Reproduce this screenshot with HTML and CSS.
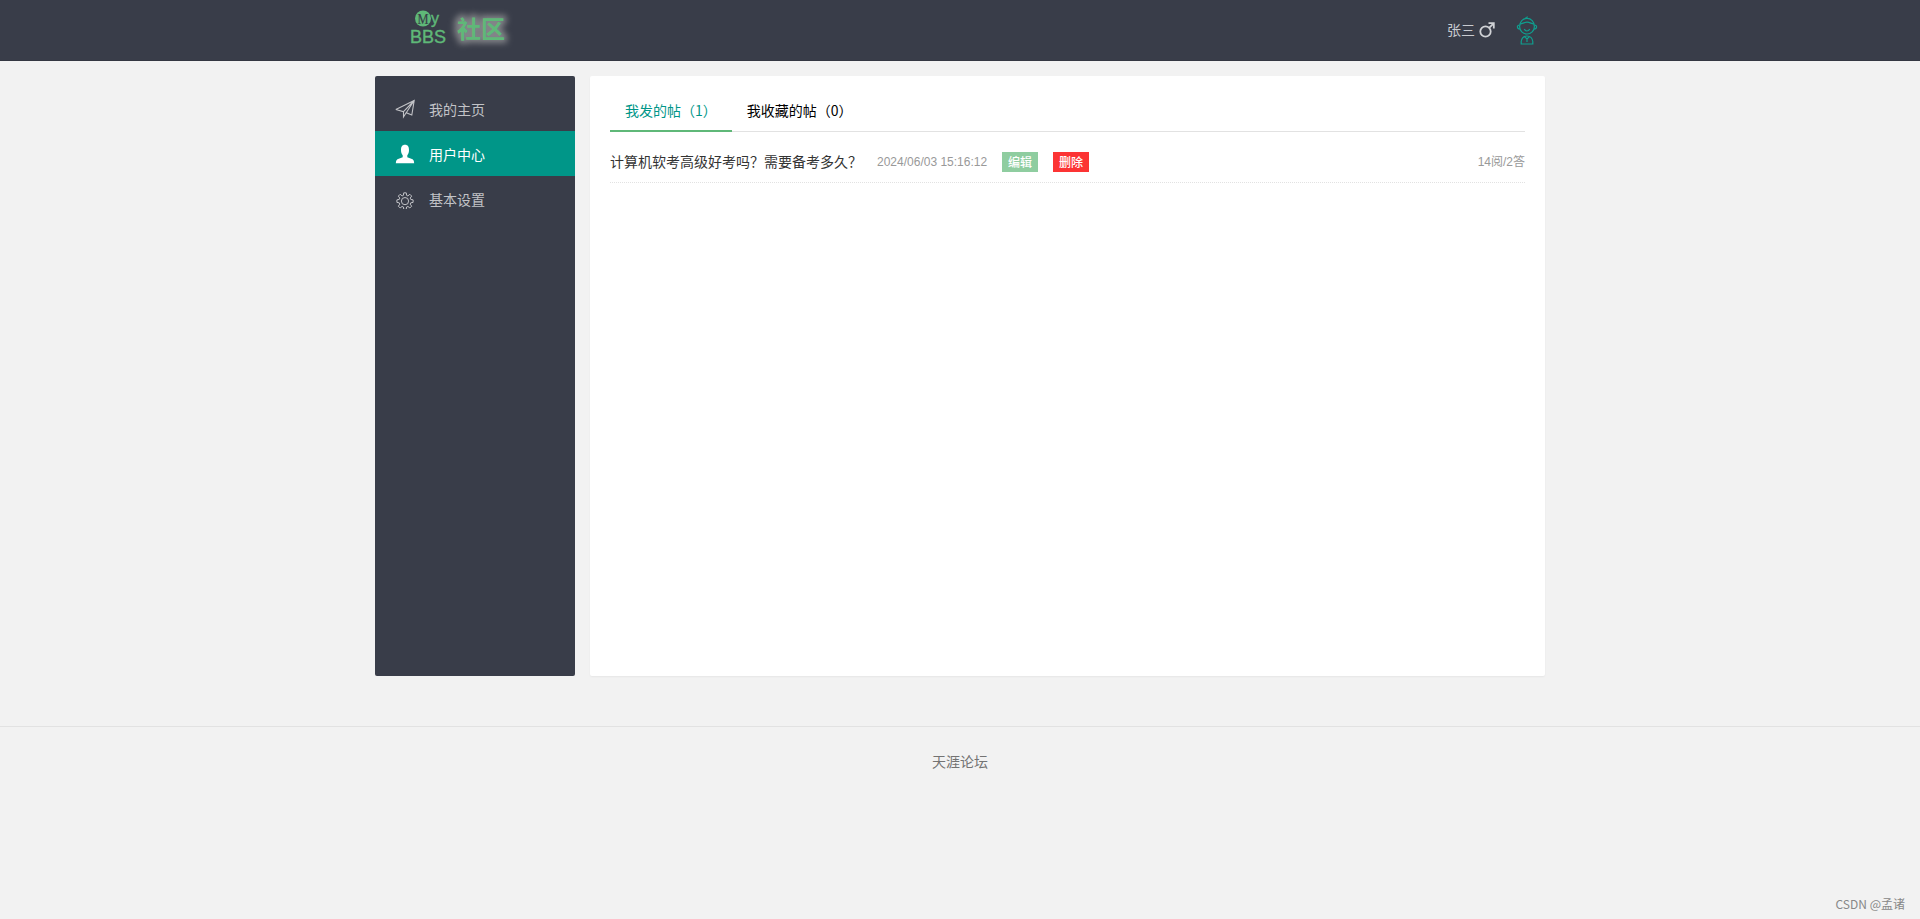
FILE: index.html
```html
<!DOCTYPE html>
<html lang="zh-CN">
<head>
    <meta charset="UTF-8">
    <meta name="viewport" content="width=device-width, initial-scale=1.0">
    <title>用户中心</title>
    <link rel="stylesheet" href="styles.css">
</head>
<body>
    <header class="header">
        <div class="header-inner">
            <a class="logo">
                <svg width="112" height="44" viewBox="0 0 112 44">
                    <defs>
                        <filter id="glow" x="-30%" y="-40%" width="160%" height="180%">
                            <feGaussianBlur stdDeviation="3"/>
                        </filter>
                    </defs>
                    <circle cx="18" cy="13.5" r="8" fill="#5fb878"/>
                    <text class="logo-m" x="12.5" y="18.5" textLength="11" lengthAdjust="spacingAndGlyphs">M</text>
                    <text class="logo-text" x="26" y="19" font-size="16">y</text>
                    <text class="logo-text" x="5" y="38" font-size="17.5" textLength="36" lengthAdjust="spacingAndGlyphs">BBS</text>
                    <text class="logo-name glow" x="52" y="33" filter="url(#glow)">社区</text>
                    <text class="logo-name" x="52" y="33">社区</text>
                </svg>
            </a>
            <div class="user">
                <span class="user-name">张三</span>
                <svg class="male" width="16" height="16" viewBox="0 0 16 16">
                    <circle cx="6.5" cy="9.5" r="5.2"/>
                    <path d="M10.2 5.8L14.6 1.4M9.5 1.2H14.8V6.5"/>
                </svg>
                <svg class="avatar" width="22" height="30" viewBox="0 0 22 30">
                    <path d="M3.6 10.5C3.6 5.5 7 2.4 11 2.4S18.4 5.5 18.4 10.5C18.4 15 15 18 11 18S3.6 15 3.6 10.5Z"/>
                    <path d="M4.2 8C7 7.6 8 6.2 11 6.2S15 7.6 17.8 8M3.6 9C.6 9 .6 13 4 13M18.4 9C21.4 9 21.4 13 18 13"/>
                    <path d="M8.2 13.2Q11 16.8 13.8 13.2M9.5 2.4Q10 .8 12 1"/>
                    <path d="M5.2 28V25.5Q6 20 11 20T16.8 25.5V28ZM8.5 20.6L11 23L13.5 20.6M11 23V26"/>
                </svg>
            </div>
        </div>
    </header>

    <div class="container">
        <ul class="side-nav">
            <li>
                <svg width="20" height="20" viewBox="0 0 20 20">
                    <path d="M.8 10.5L19.2 1.5L16.8 16L11.2 13.8L8.5 18V12.7L.8 10.5M8.5 12.7L19.2 1.5L11.2 13.8"/>
                </svg>
                <span>我的主页</span>
            </li>
            <li class="active">
                <svg width="20" height="20" viewBox="0 0 20 20">
                    <path class="solid" d="M10 .7C13 .7 14 2.8 14 6C14 8.4 13.4 10 12.3 11.3V13.3L17.6 15.2Q19.2 16 19.2 19.2H.8Q.8 16 2.4 15.2L7.7 13.3V11.3C6.6 10 6 8.4 6 6C6 2.8 7 .7 10 .7Z"/>
                </svg>
                <span>用户中心</span>
            </li>
            <li>
                <svg width="20" height="20" viewBox="0 0 20 20">
                    <g transform="translate(1 2.4) scale(.9)">
                        <path d="M8.6 1.6H11.4L11.8 4.4L13.2 5L15.4 3.2L17.4 5.2L15.8 7.4L16.4 8.9L19 9.4V12.2L16.4 12.7L15.8 14.2L17.4 16.4L15.4 18.4L13.2 16.7L11.8 17.3L11.4 20H8.6L8.2 17.3L6.8 16.7L4.6 18.4L2.6 16.4L4.2 14.2L3.6 12.7L1 12.2V9.4L3.6 8.9L4.2 7.4L2.6 5.2L4.6 3.2L6.8 5L8.2 4.4Z"/>
                        <circle cx="10" cy="10.8" r="4"/>
                    </g>
                </svg>
                <span>基本设置</span>
            </li>
        </ul>

        <div class="panel">
            <ul class="tabs">
                <li class="active">我发的帖（1）</li>
                <li>我收藏的帖（0）</li>
            </ul>
            <ul class="post-list">
                <li>
                    <a class="title">计算机软考高级好考吗？需要备考多久？</a>
                    <i>2024/06/03 15:16:12</i>
                    <a class="btn btn-edit">编辑</a>
                    <a class="btn btn-del">删除</a>
                    <em>14阅/2答</em>
                </li>
            </ul>
        </div>
    </div>

    <footer class="footer">天涯论坛</footer>
    <div class="watermark">CSDN @孟诸</div>
</body>
</html>
```

FILE: styles.css
```css
* {
    box-sizing: border-box;
    margin: 0;
    padding: 0;
}
body {
    background: #f2f2f2;
    font: 14px/24px "Noto Sans CJK SC", sans-serif;
    color: #333;
}
ul { list-style: none; }
i, em { font-style: normal; }
svg { display: block; flex: none; }

.header {
    height: 61px;
    background: #393d49;
    border-bottom: 1px solid #343742;
}
.header-inner {
    width: 1170px;
    height: 60px;
    margin: 0 auto;
    padding: 0 7px 0 30px;
    display: flex;
    justify-content: space-between;
}
.logo { padding-top: 5px; }
.logo svg { overflow: visible; }
.logo-text {
    font-family: "Liberation Sans", Arial, sans-serif;
    fill: #5fb878;
    stroke: #5fb878;
    stroke-width: .4;
}
.logo-m {
    font: 15px "Liberation Serif", serif;
    fill: #393d49;
    stroke: #393d49;
    stroke-width: .2;
}
.logo-name {
    font-size: 24px;
    font-weight: bold;
    fill: #5fb878;
}
.glow {
    fill: #aaa;
    stroke: #aaa;
    stroke-width: 6;
    opacity: .65;
}
.user {
    display: flex;
    align-items: center;
    color: #c8cacf;
}
.user-name { margin-top: -2px; }
.male {
    margin: 0 21px 0 4px;
    fill: none;
    stroke: #d0d2d6;
    stroke-width: 1.8;
}
.avatar {
    margin-top: 2px;
    fill: none;
    stroke: #0f9f8f;
    stroke-width: 1.2;
}

.container {
    width: 1170px;
    margin: 15px auto 0;
    display: flex;
    gap: 15px;
}
.side-nav {
    width: 200px;
    height: 600px;
    padding: 10px 0;
    background: #393d49;
    border-radius: 2px;
}
.side-nav li {
    height: 45px;
    padding-left: 20px;
    display: flex;
    align-items: center;
    gap: 14px;
    color: #c2c3c7;
}
.side-nav svg {
    fill: none;
    stroke: currentColor;
    stroke-width: 1.1;
}
.side-nav .solid {
    fill: #fff;
    stroke: none;
}
.side-nav .active {
    background: #009688;
    color: #fff;
}

.panel {
    flex: 1;
    height: 600px;
    padding: 15px 20px;
    background: #fff;
    border-radius: 2px;
    box-shadow: 0 1px 2px rgba(0,0,0,.05);
}
.tabs {
    height: 41px;
    display: flex;
    border-bottom: 1px solid #e2e2e2;
}
.tabs li {
    height: 41px;
    padding: 0 15px;
    line-height: 38px;
    color: #000;
}
.tabs .active {
    color: #009688;
    border-bottom: 2px solid #5fb878;
}
.post-list { padding-top: 10px; }
.post-list li {
    height: 41px;
    display: flex;
    align-items: center;
    gap: 15px;
    border-bottom: 1px dotted #e2e2e2;
}
.post-list .title { margin-top: -2px; }
.post-list i, .post-list em {
    font-family: "Liberation Sans", "Noto Sans CJK SC", sans-serif;
    font-size: 12px;
    color: #999;
}
.post-list em { margin-left: auto; }
.btn {
    width: 36px;
    height: 20px;
    line-height: 20px;
    font-size: 12px;
    font-weight: 500;
    text-align: center;
    color: #fff;
}
.btn-edit { background: #8fcda0; }
.btn-del { background: #fc3434; }

.footer {
    margin-top: 50px;
    padding: 22px 0;
    border-top: 1px solid #e2e2e2;
    text-align: center;
    color: #737373;
}
.watermark {
    position: absolute;
    right: 15px;
    bottom: 3px;
    font-size: 12px;
    color: #888;
}
```
